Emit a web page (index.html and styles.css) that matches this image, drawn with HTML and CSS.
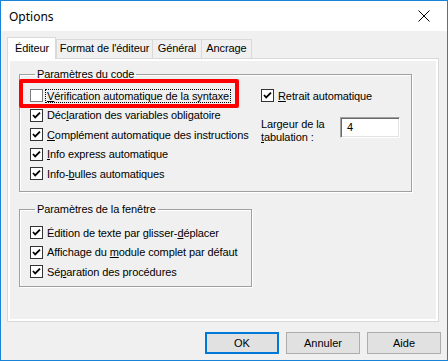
FILE: index.html
```html
<!DOCTYPE html>
<html lang="fr">

<head>
    <meta charset="UTF-8" />
    <title>Options</title>
    <link rel="stylesheet" href="styles.css">
</head>

<body>
    <div class="window">
        <div class="titlebar">
            <span class="title">Options</span>
            <span class="close">
                <svg width="12" height="12" viewBox="0 0 12 12">
                    <path d="M0.5 0.5 L11.5 11.5 M11.5 0.5 L0.5 11.5" stroke="#000" stroke-width="1" fill="none" />
                </svg>
            </span>
        </div>

        <div class="content">
            <div class="tabs">
                <div class="tab active">Éditeur</div>
                <div class="tab">Format de l'éditeur</div>
                <div class="tab">Général</div>
                <div class="tab">Ancrage</div>
            </div>

            <div class="panel">
                <div class="pane">
                    <fieldset class="group group-code">
                        <legend>Paramètres du code</legend>
                        <div class="group-cols">
                            <div class="col-left">
                                <div class="row">
                                    <span class="check"></span>
                                    <span class="label focused"><u>V</u>érification automatique de la syntaxe</span>
                                </div>
                                <div class="row">
                                    <span class="check checked"></span>
                                    <span class="label">Déc<u>l</u>aration des variables obligatoire</span>
                                </div>
                                <div class="row">
                                    <span class="check checked"></span>
                                    <span class="label"><u>C</u>omplément automatique des instructions</span>
                                </div>
                                <div class="row">
                                    <span class="check checked"></span>
                                    <span class="label"><u>I</u>nfo express automatique</span>
                                </div>
                                <div class="row">
                                    <span class="check checked"></span>
                                    <span class="label">Info-<u>b</u>ulles automatiques</span>
                                </div>
                            </div>
                            <div class="col-right">
                                <div class="row">
                                    <span class="check checked"></span>
                                    <span class="label"><u>R</u>etrait automatique</span>
                                </div>
                                <div class="tab-width">
                                    <span class="tab-label">Largeur de la<br><u>t</u>abulation :</span>
                                    <span class="textbox">4</span>
                                </div>
                            </div>
                        </div>
                    </fieldset>

                    <fieldset class="group group-window">
                        <legend>Paramètres de la fenêtre</legend>
                        <div class="row">
                            <span class="check checked"></span>
                            <span class="label">Édition de texte par glisser-<u>d</u>éplacer</span>
                        </div>
                        <div class="row">
                            <span class="check checked"></span>
                            <span class="label">Affichage du <u>m</u>odule complet par défaut</span>
                        </div>
                        <div class="row">
                            <span class="check checked"></span>
                            <span class="label">Sé<u>p</u>aration des procédures</span>
                        </div>
                    </fieldset>

                    <div class="highlight"></div>
                </div>
            </div>

            <div class="buttons">
                <button class="btn default">OK</button>
                <button class="btn">Annuler</button>
                <button class="btn">Aide</button>
            </div>
        </div>
    </div>
</body>

</html>
```

FILE: styles.css
```css
:root {
    --accent: #1883d7;
    --bg: #f0f0f0;
    --tab-border: #d9d9d9;
    --group-border: #a0a0a0;
    --text: #000;
}

* {
    margin: 0;
    padding: 0;
    box-sizing: border-box;
}

body {
    width: 448px;
    height: 361px;
    font-family: 'Liberation Sans', Arial, sans-serif;
    font-size: 11px;
    letter-spacing: -0.1px;
    color: var(--text);
    background: #fff;
}

.window {
    width: 448px;
    height: 361px;
    border: 1px solid var(--accent);
    background: var(--bg);
    display: flex;
    flex-direction: column;
}

.titlebar {
    height: 30px;
    background: #fff;
    display: flex;
    align-items: center;
    justify-content: space-between;
    padding: 0 0 0 8px;
    flex-shrink: 0;
}

.title {
    font-family: 'Noto Sans', 'Liberation Sans', sans-serif;
    font-size: 12px;
    letter-spacing: 0;
}

.close {
    width: 46px;
    height: 30px;
    display: flex;
    align-items: center;
    justify-content: center;
    padding-right: 1px;
}

.content {
    padding: 6px 6px 0 6px;
}

/* tab strip */
.tabs {
    display: flex;
    align-items: flex-end;
    height: 21px;
    position: relative;
    z-index: 1;
}

.tab {
    height: 19px;
    line-height: 17px;
    border: 1px solid var(--tab-border);
    border-bottom: none;
    margin-left: -1px;
    background: var(--bg);
    white-space: nowrap;
    text-align: center;
    overflow: hidden;
}

.tab:nth-child(2) {
    width: 97px;
    margin-left: 0;
}

.tab:nth-child(3) {
    width: 50px;
}

.tab:nth-child(4) {
    width: 51px;
}

.tab.active {
    height: 22px;
    width: 49px;
    margin-left: 0;
    margin-bottom: -1px;
    padding-left: 7px;
    text-align: left;
    line-height: 20px;
    background: #fff;
}

.panel {
    width: 432px;
    height: 264px;
    border: 1px solid var(--tab-border);
    background: #fff;
    padding: 2px;
}

.pane {
    height: 100%;
    background: var(--bg);
    padding: 6px 0 0 9px;
    position: relative;
}

/* group boxes */
.group {
    border: 1px solid var(--group-border);
    box-shadow: inset 1px 1px 0 #fff, 1px 1px 0 #fff;
    padding: 5px 0 0 10px;
}

.group legend {
    margin-left: 5px;
    padding: 0 2px;
    line-height: 14px;
}

.group-code {
    width: 393px;
    height: 125px;
}

.group-window {
    width: 233px;
    height: 85px;
    margin-top: 10px;
    padding-top: 7px;
}

.group-cols {
    display: flex;
}

.col-left {
    width: 231px;
}

.row {
    height: 19.5px;
    display: flex;
    align-items: center;
    white-space: nowrap;
}

.check {
    width: 13px;
    height: 13px;
    flex-shrink: 0;
    background: #fff;
    border: 1px solid #7a7a7a;
    margin-right: 4px;
}

.check.checked {
    border-color: #333;
    background: #fff url("data:image/svg+xml,%3Csvg xmlns='http://www.w3.org/2000/svg' width='11' height='11'%3E%3Cpath d='M2 5 L4.2 7.5 L9 2.6' stroke='%23000' stroke-width='1.8' fill='none'/%3E%3C/svg%3E") no-repeat center;
}

.label u {
    text-decoration-thickness: 1px;
    text-underline-offset: 1px;
}

.label.focused {
    outline: 1px dotted #000;
    outline-offset: 0;
    padding: 0 1px;
    margin-left: -1px;
}

.tab-width {
    display: flex;
    align-items: flex-start;
    margin-top: 11px;
}

.tab-label {
    width: 79px;
    line-height: 13px;
    padding-top: 1px;
}

.textbox {
    width: 60px;
    height: 21px;
    background: #fff;
    border: 1px solid;
    border-color: var(--group-border) #fff #fff var(--group-border);
    box-shadow: inset 1px 1px 0 #696969, inset -1px -1px 0 #e3e3e3;
    padding: 3px 0 0 6px;
}

/* red annotation frame */
.highlight {
    position: absolute;
    left: 9px;
    top: 18px;
    width: 220px;
    height: 29px;
    border: 4px solid #f00;
    border-radius: 2px;
}

/* dialog buttons */
.buttons {
    display: flex;
    justify-content: flex-end;
    gap: 7px;
    margin-top: 10px;
}

.btn {
    width: 74px;
    height: 22px;
    font-family: inherit;
    font-size: 11px;
    background: #e1e1e1;
    border: 1px solid #adadad;
    color: var(--text);
}

.btn.default {
    border: 2px solid #0078d7;
}
```
